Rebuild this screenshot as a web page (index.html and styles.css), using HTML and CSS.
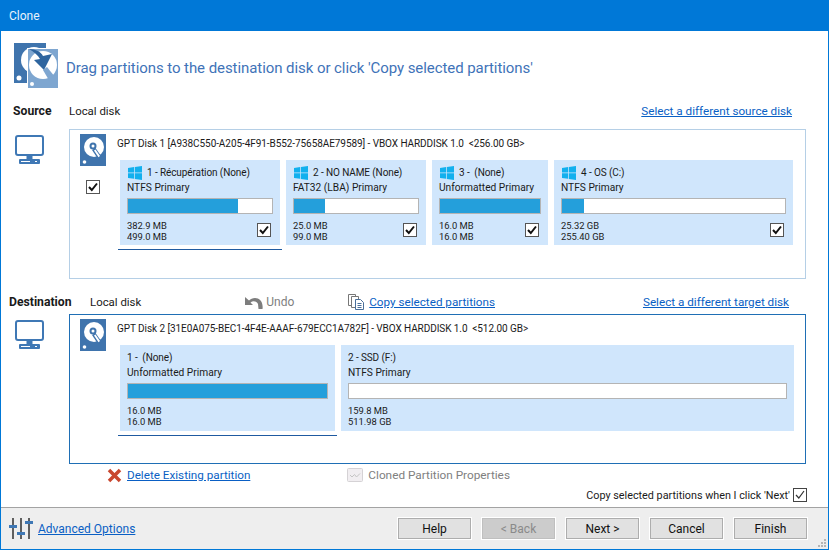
FILE: index.html
```html
<!DOCTYPE html>
<html>
<head>
  <link rel="stylesheet" href="styles.css">
</head>
<body>
  <svg class="defs" width="0" height="0">
    <symbol id="win" viewBox="0 0 15 15">
      <path d="M0 2.2 6.6 1.2V7H0ZM7.4 1.1 15 0V7H7.4ZM0 7.8H6.6V13.7L0 12.8ZM7.4 7.8H15V15L7.4 13.9Z" fill="#12b0ee"/>
    </symbol>
    <symbol id="disk" viewBox="0 0 26 32">
      <rect width="26" height="32" fill="#3f74ad"/>
      <circle cx="14" cy="13" r="10" fill="#fff"/>
      <circle cx="13" cy="12" r="3.500" fill="#3f74ad"/>
      <circle cx="13" cy="12" r="1.500" fill="#fff"/>
      <path d="M12 16 15.500 14 21.500 22.500 18 25Z" fill="#3f74ad"/>
      <path d="M14 16.500 15.500 15.500 20 22 18.500 23.200Z" fill="#fff"/>
      <circle cx="4.500" cy="28" r="1.800" fill="#fff"/>
    </symbol>
    <symbol id="pc" viewBox="0 0 29 29">
      <rect x="1" y="1" width="27" height="19" rx="2" fill="#fff" stroke="#3f78b5" stroke-width="2"/>
      <path d="M11.500 21H17.500V24H11.500Z" fill="#3f78b5"/>
      <rect x="4" y="24" width="21" height="5" rx="1" fill="#3f78b5"/>
      <path d="M6 26.500H15M20 26.500H22" stroke="#fff" stroke-width="1"/>
    </symbol>
    <symbol id="tick" viewBox="0 0 14 14">
      <rect x=".5" y=".5" width="13" height="13" fill="#fff" stroke="#555"/>
      <path d="M3 7 5.800 10 11 3.500" fill="none" stroke="#111" stroke-width="2"/>
    </symbol>
  </svg>

  <div class="window">
    <div class="titlebar">Clone</div>

    <div class="intro">
      <svg class="intro-icon" width="46" height="46" viewBox="0 0 46 46">
        <rect x="0" y="0" width="32" height="40" fill="#3f74ad"/>
        <circle cx="20" cy="17" r="13" fill="#fff"/>
        <circle cx="5" cy="35" r="2.500" fill="#fff"/>
        <rect x="13.500" y="5.500" width="31" height="40" fill="#7ea6d0" stroke="#fff"/>
        <circle cx="29" cy="22" r="14" fill="#fff"/>
        <path d="M15 6C22 6 27 9 29 13L38 11 30 27 20 17 26 16C24 12 20 9 15 6Z" fill="#2e659f"/>
        <path d="M29 27 33 24 41 34 36 39Z" fill="#7ea6d0"/>
        <circle cx="18" cy="41" r="2" fill="#fff"/>
      </svg>
      <div class="intro-text">Drag partitions to the destination disk or click 'Copy selected partitions'</div>
    </div>

    <div class="head-row source-head">
      <span class="head-label">Source</span>
      <span class="head-kind">Local disk</span>
      <a class="link head-link">Select a different source disk</a>
    </div>

    <div class="disk-row">
      <svg class="pc-icon"><use href="#pc"/></svg>
      <div class="disk-box source-box">
        <div class="disk-side">
          <svg class="disk-icon"><use href="#disk"/></svg>
          <svg class="disk-check"><use href="#tick"/></svg>
        </div>
        <div class="disk-main">
          <div class="disk-title">GPT Disk 1 [A938C550-A205-4F91-B552-75658AE79589] - VBOX HARDDISK 1.0&nbsp; &lt;256.00 GB&gt;</div>
          <div class="parts">
            <div class="part w160 current">
              <div class="part-name"><svg class="win"><use href="#win"/></svg>1 - Récupération (None)</div>
              <div class="part-type">NTFS Primary</div>
              <div class="bar"><div class="fill" style="width: 76.7%"></div></div>
              <div class="part-foot">
                <div class="sizes"><div>382.9 MB</div><div>499.0 MB</div></div>
                <svg class="tick"><use href="#tick"/></svg>
              </div>
            </div>
            <div class="part w140">
              <div class="part-name"><svg class="win"><use href="#win"/></svg>2 - NO NAME (None)</div>
              <div class="part-type">FAT32 (LBA) Primary</div>
              <div class="bar"><div class="fill" style="width: 25.3%"></div></div>
              <div class="part-foot">
                <div class="sizes"><div>25.0 MB</div><div>99.0 MB</div></div>
                <svg class="tick"><use href="#tick"/></svg>
              </div>
            </div>
            <div class="part w116">
              <div class="part-name"><svg class="win"><use href="#win"/></svg>3 -&nbsp; (None)</div>
              <div class="part-type">Unformatted Primary</div>
              <div class="bar"><div class="fill" style="width: 100%"></div></div>
              <div class="part-foot">
                <div class="sizes"><div>16.0 MB</div><div>16.0 MB</div></div>
                <svg class="tick"><use href="#tick"/></svg>
              </div>
            </div>
            <div class="part w239">
              <div class="part-name"><svg class="win"><use href="#win"/></svg>4 - OS (C:)</div>
              <div class="part-type">NTFS Primary</div>
              <div class="bar"><div class="fill" style="width: 9.9%"></div></div>
              <div class="part-foot">
                <div class="sizes"><div>25.32 GB</div><div>255.40 GB</div></div>
                <svg class="tick"><use href="#tick"/></svg>
              </div>
            </div>
          </div>
        </div>
      </div>
    </div>

    <div class="head-row dest-head">
      <span class="head-label dest-label">Destination</span>
      <span class="head-kind">Local disk</span>
      <span class="undo">
        <svg width="18" height="13" viewBox="0 0 18 13"><path d="M0 1V9H8L5.500 6.500C8 4.500 11.500 5 13 8L13.500 13H17.500C18.500 6 14.500 2 10 2 7.500 2 5.500 3 4 4.500Z" fill="#7d7d7d"/></svg>
        Undo
      </span>
      <span class="copy">
        <svg width="17" height="16" viewBox="0 0 17 16" fill="#fff" stroke="#777"><path d="M.5.500H7.500V11.500H.5Z"/><path d="M3.500 2.500H10.500L10.500 13.500H3.500Z"/><path d="M7.500 5.500H12.500L15.500 8.500V15.500H7.500Z" stroke="#4a6f9a"/><path d="M9.500 9.500H13.500M9.500 11.500H13.500M9.500 13.500H13.500" stroke="#4a6f9a"/></svg>
        <a class="link">Copy selected partitions</a>
      </span>
      <a class="link head-link target-link">Select a different target disk</a>
    </div>

    <div class="disk-row">
      <svg class="pc-icon"><use href="#pc"/></svg>
      <div class="disk-box dest-box">
        <div class="disk-side">
          <svg class="disk-icon"><use href="#disk"/></svg>
        </div>
        <div class="disk-main">
          <div class="disk-title">GPT Disk 2 [31E0A075-BEC1-4F4E-AAAF-679ECC1A782F] - VBOX HARDDISK 1.0&nbsp; &lt;512.00 GB&gt;</div>
          <div class="parts">
            <div class="part w215 current">
              <div class="part-name">1 -&nbsp; (None)</div>
              <div class="part-type">Unformatted Primary</div>
              <div class="bar"><div class="fill" style="width: 100%"></div></div>
              <div class="sizes"><div>16.0 MB</div><div>16.0 MB</div></div>
            </div>
            <div class="part w453">
              <div class="part-name">2 - SSD (F:)</div>
              <div class="part-type">NTFS Primary</div>
              <div class="bar"><div class="fill" style="width: 0"></div></div>
              <div class="sizes"><div>159.8 MB</div><div>511.98 GB</div></div>
            </div>
          </div>
        </div>
      </div>
    </div>

    <div class="actions">
      <span class="delete">
        <svg width="15" height="15" viewBox="0 0 15 15"><path d="M2 2 13 13M13 2 2 13" stroke="#c9472f" stroke-width="3.500"/></svg>
        <a class="link">Delete Existing partition</a>
      </span>
      <span class="cloned">
        <svg width="16" height="14" viewBox="0 0 16 14"><rect x=".5" y=".5" width="15" height="13" rx="1" fill="#f1eef1" stroke="#d5d2d5"/><path d="M3 7 5 9 7.500 6.500 9.500 9 13 5.500" fill="none" stroke="#c4c4c4"/></svg>
        Cloned Partition Properties
      </span>
    </div>

    <div class="copy-on-next">
      Copy selected partitions when I click 'Next'
      <svg width="14" height="14" viewBox="0 0 14 14"><rect x=".5" y=".5" width="13" height="13" fill="#fff" stroke="#444"/><path d="M3 7 5.800 10 11 3" fill="none" stroke="#333" stroke-width="1.200"/></svg>
    </div>

    <div class="footer">
      <div class="advanced">
        <svg width="24" height="24" viewBox="0 0 24 24">
          <path d="M4 1V22M12 1V22M20 1V22" stroke="#5f5f5f" stroke-width="2"/>
          <path d="M0 8H8V11H0ZM8 15H16V18H8ZM16 4H24V7H16Z" fill="#3f78b5"/>
        </svg>
        <a class="link">Advanced Options</a>
      </div>
      <div class="buttons">
        <button>Help</button>
        <button class="disabled">&lt; Back</button>
        <button>Next &gt;</button>
        <button>Cancel</button>
        <button>Finish</button>
      </div>
      <svg class="grip" width="10" height="10" viewBox="0 0 10 10" fill="#b5b5b5"><path d="M7 1H9V3H7ZM4 4H6V6H4ZM7 4H9V6H7ZM1 7H3V9H1ZM4 7H6V9H4ZM7 7H9V9H7Z"/></svg>
    </div>
  </div>
</body>
</html>
```

FILE: styles.css
```css
* {
  box-sizing: border-box;
}

body {
  margin: 0;
  font-family: Roboto, "Open Sans", sans-serif;
  font-size: 10.8px;
  color: #1a1a1a;
  background-color: #fff;
}

.defs {
  position: absolute;
}

svg {
  display: block;
  flex: none;
}

.window {
  width: 829px;
  height: 550px;
  display: flex;
  flex-direction: column;
  border: 1px solid #0078d7;
  overflow: hidden;
}

.titlebar {
  height: 30px;
  padding-left: 8px;
  display: flex;
  align-items: center;
  flex: none;
  background-color: #0078d7;
  color: #e8f2fb;
  font-size: 12px;
}

.link {
  color: #0a5fc4;
  text-decoration: underline;
  font-size: 11.7px;
  white-space: nowrap;
}

/* Haut de page */
.intro {
  height: 72px;
  padding: 12px 0 0 13px;
  display: flex;
  gap: 6px;
  flex: none;
}

.intro-text {
  margin-top: 16px;
  font-size: 15px;
  letter-spacing: -0.07px;
  color: #3f73b8;
  white-space: nowrap;
}

.head-row {
  display: flex;
  align-items: center;
  flex: none;
  font-size: 11.4px;
  white-space: nowrap;
}

.source-head {
  height: 26px;
  padding: 0 36px 10px 12px;
}

.dest-head {
  height: 24px;
  margin-top: 11px;
  padding: 0 39px 0 8px;
}

.head-label {
  width: 56px;
  font-size: 12.2px;
  font-weight: 700;
}

.dest-label {
  width: 81px;
}

.head-link {
  margin-left: auto;
}

.undo {
  margin-left: 104px;
  display: flex;
  align-items: center;
  gap: 3px;
  color: #808080;
  font-size: 12px;
}

.copy {
  margin-left: 54px;
  display: flex;
  align-items: center;
  gap: 4px;
}

/* Disques */
.disk-row {
  display: flex;
  flex: none;
}

.pc-icon {
  width: 29px;
  height: 29px;
  margin: 6px 25px 0 14px;
}

.disk-box {
  width: 737px;
  display: flex;
  background-color: #fff;
  border: 1px solid #b5cfe6;
}

.source-box {
  height: 150px;
}

.dest-box {
  height: 150px;
  border-color: #1f6fb5;
}

.disk-side {
  width: 47px;
  padding: 4px 0 0 10px;
  flex: none;
}

.disk-icon {
  width: 26px;
  height: 32px;
}

.disk-check {
  width: 14px;
  height: 14px;
  margin: 14px 0 0 6px;
}

.disk-title {
  height: 26px;
  padding-top: 8px;
  font-size: 10px;
  letter-spacing: -0.07px;
  white-space: nowrap;
}

.parts {
  margin: 4px 0 0 3px;
  display: flex;
  gap: 6px;
}

.part {
  height: 85px;
  padding: 5px 7px 0;
  flex: none;
  position: relative;
  background-color: #d0e6fc;
  font-size: 10.2px;
}

.dest-box .part {
  height: 86px;
}

.w116 { width: 116px; }
.w140 { width: 140px; }
.w160 { width: 160px; }
.w215 { width: 215px; }
.w239 { width: 239px; }
.w453 { width: 453px; }

.current::after {
  content: "";
  position: absolute;
  left: -2px;
  right: -2px;
  bottom: -5px;
  height: 1px;
  background-color: #1f5aa0;
}

.part-name {
  height: 15px;
  display: flex;
  align-items: center;
  gap: 5px;
  font-size: 10px;
  letter-spacing: -0.1px;
  white-space: nowrap;
}

.win {
  width: 14px;
  height: 14px;
  margin-left: 1px;
}

.part-type {
  height: 15px;
  line-height: 15px;
  white-space: nowrap;
}

.bar {
  height: 16px;
  margin-top: 3px;
  background-color: #fff;
  border: 1px solid #b4b4b4;
}

.fill {
  height: 100%;
  background-color: #249fdb;
}

.part-foot {
  display: flex;
  align-items: center;
  justify-content: space-between;
  padding-right: 2px;
}

.sizes {
  margin-top: 6px;
  font-size: 9.4px;
  line-height: 11px;
}

.tick {
  width: 14px;
  height: 14px;
  margin-top: 4px;
}

/* Bas de page */
.actions {
  height: 22px;
  padding-left: 106px;
  display: flex;
  align-items: center;
  flex: none;
  font-size: 11.8px;
}

.delete {
  display: flex;
  align-items: center;
  gap: 5px;
}

.cloned {
  margin-left: 97px;
  display: flex;
  align-items: center;
  gap: 5px;
  color: #808080;
}

.copy-on-next {
  height: 18px;
  padding-right: 21px;
  display: flex;
  align-items: center;
  justify-content: flex-end;
  gap: 3px;
  flex: none;
  white-space: nowrap;
}

.footer {
  margin-top: auto;
  height: 42px;
  padding: 0 21px 0 8px;
  display: flex;
  align-items: center;
  flex: none;
  position: relative;
  background-color: #eeeeee;
  border-top: 1px solid #a3a3a3;
}

.advanced {
  display: flex;
  align-items: center;
  gap: 5px;
}

.advanced .link {
  font-size: 12px;
}

.buttons {
  margin-left: auto;
  display: flex;
  gap: 11px;
}

button {
  width: 73px;
  height: 21px;
  padding: 0;
  font-family: inherit;
  font-size: 12px;
  color: #111;
  background-color: #e1e1e1;
  border: 1px solid #adadad;
  box-shadow: 0 0 0 1px #fff;
}

button.disabled {
  color: #8a8a8a;
  background-color: #cccccc;
  border-color: #bfbfbf;
}

.grip {
  position: absolute;
  right: 1px;
  bottom: 1px;
}
```
